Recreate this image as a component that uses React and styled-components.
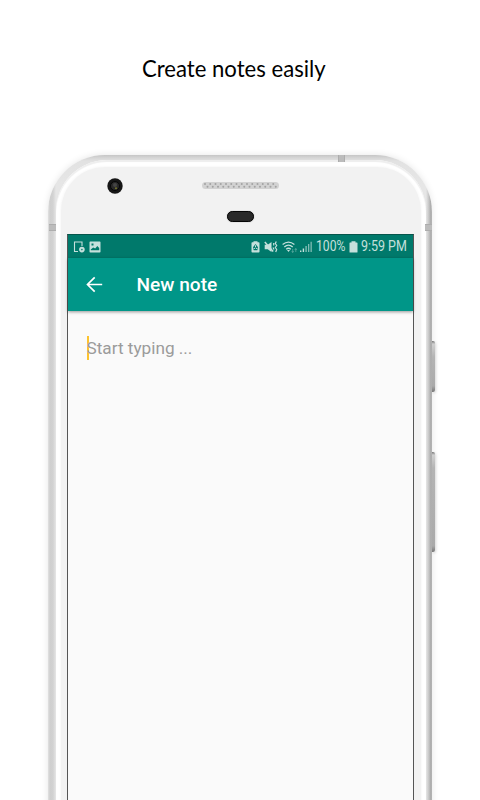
import React from 'react';
import styled, { createGlobalStyle } from 'styled-components';

const Global = createGlobalStyle`
  * { box-sizing: border-box; }
  body { margin: 0; background: #fff; overflow: hidden; }
`;

const Page = styled.main`
  width: 480px;
  height: 800px;
  overflow: hidden;
  display: flex;
  flex-direction: column;
  background: #fff;
`;

const Header = styled.header`
  height: 155px;
  flex: none;
  padding: 54px 0 0 142px;
`;

const Title = styled.h1`
  margin: 0;
  width: max-content;
  font: 400 23.5px/29px Lato, sans-serif;
  color: #000;
  transform: ${(p) => `scaleX(${p.$stretch})`};
  transform-origin: left;
`;

const Phone = styled.section`
  position: relative;
  width: 384px;
  height: 700px;
  flex: none;
  margin-left: 48px;
  padding: 5px 6px 0 8px;
  border-radius: 57px 57px 0 0;
  background:
    linear-gradient(#c6c6c6, #d6d6d6 3px, #e2e2e2 6px, transparent 30px),
    linear-gradient(90deg, #e2e2e2 0, #cfcfcf 2px, #d2d2d2 5px, #e6e6e6 8px, #e6e6e6 378px, #d0d0d0 380px, #a9a9a9 383px, #bcbcbc 384px);
  box-shadow: 0 0 7px rgba(0, 0, 0, 0.1);
`;

const Bezel = styled.div`
  height: 100%;
  padding: 7px 5px 0 5px;
  border-radius: 51px 51px 0 0;
  background: #fff;
  box-shadow: inset 0 2px 1px #eee;
`;

const Face = styled.div`
  height: 100%;
  padding: 0 7px 0 6px;
  border-radius: 44px 44px 0 0;
  background: #f2f2f2;
  box-shadow: 0 0 2px 1px #f9f9f9;
`;

const Sensors = styled.div`
  height: 67px;
  padding-top: 11px;
  display: grid;
  grid-template-columns: 95px 157px 95px;
  justify-items: center;
`;

const Camera = styled.svg`
  width: 16px;
  height: 16px;
`;

const Earpiece = styled.div`
  display: flex;
  flex-direction: column;
  align-items: center;
  padding-top: 4px;
  gap: 22px;
`;

const Grille = styled.svg`
  width: 77px;
  height: 7px;
`;

const Proximity = styled.i`
  width: 27px;
  height: 11px;
  border-radius: 6px;
  background: #292929;
  border: 1px solid #050505;
  box-shadow: 0 0 1px #777;
`;

const Screen = styled.div`
  width: 347px;
  height: 600px;
  border: 1px solid #555;
  border-top-color: #06564c;
  background: #fafafa;
`;

const StatusBar = styled.div`
  height: 23px;
  display: flex;
  align-items: center;
  padding: 0 6px 0 5px;
  background: #00796b;
  color: #c5e0dc;
  font: 400 14px/23px Roboto, sans-serif;
`;

const Glyph = styled.svg`
  flex: none;
  width: ${(p) => p.$w}px;
  height: 14px;
  margin-right: ${(p) => p.$gap || 0}px;
  fill: currentColor;
`;

const Spacer = styled.span`
  flex: 1;
`;

const StatusText = styled.span`
  width: ${(p) => p.$w}px;
  margin-right: ${(p) => p.$gap || 0}px;
  white-space: nowrap;
  transform: ${(p) => `scaleX(${p.$stretch})`};
  transform-origin: left;
`;

const AppBar = styled.div`
  height: 53px;
  display: flex;
  align-items: center;
  padding: 0 0 1px 18px;
  background: #009688;
  color: #fff;
  box-shadow: 0 1px 3px rgba(0, 0, 0, 0.4);
`;

const BackIcon = styled.svg`
  width: 17px;
  height: 17px;
  margin-right: 33.5px;
  fill: none;
  stroke: currentColor;
  stroke-width: 1.7;
`;

const AppTitle = styled.h2`
  margin: 0;
  padding-top: 2px;
  font: 500 19.1px/24px Roboto, sans-serif;
`;

const Editor = styled.div`
  display: flex;
  align-items: center;
  height: 24px;
  margin: 25px 0 0 18.5px;
  font: 400 17.2px/24px Roboto, sans-serif;
  color: #9b9b9b;
`;

const Caret = styled.i`
  width: 2px;
  height: 24px;
  margin-right: -2px;
  background: #fcc32e;
`;

const Antenna = styled.i`
  position: absolute;
  left: ${(p) => p.$x}px;
  top: ${(p) => p.$y}px;
  width: ${(p) => p.$w}px;
  height: ${(p) => p.$h}px;
  background: #bcbcbc;
  border: solid #adadad;
  border-width: ${(p) => (p.$side ? '1px 0' : '0 1px')};
`;

const SideButton = styled.i`
  position: absolute;
  left: 384px;
  top: ${(p) => p.$y}px;
  width: 3px;
  height: ${(p) => p.$h}px;
  border-radius: 0 2px 2px 0;
  background: linear-gradient(#777 0, #d0d0d0 3px, #b4b4b4 16px, #aaa calc(100% - 6px), #777 100%);
  box-shadow: 1px 1px 3px rgba(0, 0, 0, 0.15);
`;

const holes = Array.from({ length: 14 }, (_, i) => 4 + i * 5.25);

export default function App() {
  return (
    <>
      <Global />
      <Page>
        <Header>
          <Title $stretch={0.941}>Create notes easily</Title>
        </Header>
        <Phone>
          <Antenna $x={290} $y={0} $w={7} $h={7} />
          <Antenna $side $x={1} $y={69} $w={7} $h={7} />
          <Antenna $side $x={377} $y={69} $w={7} $h={7} />
          <SideButton $y={186} $h={51} />
          <SideButton $y={297} $h={100} />
          <Bezel>
            <Face>
              <Sensors>
                <Camera viewBox="0 0 16 16">
                  <circle cx="8" cy="8" r="7.7" fill="#161616" />
                  <circle cx="8" cy="8" r="4.5" fill="#292929" stroke="#050505" />
                  <circle cx="8" cy="7" r="2" fill="#444" />
                  <circle cx="9" cy="10.3" r="1" fill="#77772c" />
                </Camera>
                <Earpiece>
                  <Grille viewBox="0 0 77 7">
                    <rect width="77" height="7" rx="3.5" fill="#d2d2d2" />
                    {holes.map((x) => (
                      <g key={x} fill="#a2a2a2">
                        <circle cx={x - 1} cy="2" r="1" />
                        <circle cx={x + 1.5} cy="4.7" r="1" />
                      </g>
                    ))}
                  </Grille>
                  <Proximity />
                </Earpiece>
              </Sensors>
              <Screen>
                <StatusBar>
                  <Glyph $w={12} $gap={4} viewBox="0 0 12 14">
                    <path d="M5 11.5H1.5V2H9V6" fill="none" stroke="currentColor" strokeWidth="1.1" />
                    <circle cx="8.9" cy="9.6" r="2.8" />
                    <circle cx="8.9" cy="9.6" r=".8" fill="#00796b" />
                  </Glyph>
                  <Glyph $w={12} viewBox="0 0 12 14">
                    <path fillRule="evenodd" d="M1.3 1.5h9.4q.8 0 .8.8v9.4q0 .8-.8.8H1.3q-.8 0-.8-.8V2.3q0-.8.8-.8zM1.8 10.3h8.4V8L8.3 6 6.2 8.4 4.2 7.4 1.8 9.5zM2.5 3.5v2h2v-2z" />
                  </Glyph>
                  <Spacer />
                  <Glyph $w={9} $gap={4} viewBox="0 0 9 14">
                    <path fillRule="evenodd" d="M2.5 1.2h4v1H7.7q.8 0 .8.8v8.8q0 .8-.8.8H1.3q-.8 0-.8-.8V3q0-.8.8-.8h1.2zM4.5 4 2 7.2l.7 3h3.6l.7-3z" />
                    <path d="M4.5 5.3v2M2.7 8.4h1.4M5 8.4h1.3" stroke="currentColor" />
                  </Glyph>
                  <Glyph $w={14} $gap={4} viewBox="0 0 14 14">
                    <path d="M.7 4.7h3L7.5 2v10L3.7 9.3h-3z" />
                    <path d="M.8 2l8.4 9.5" stroke="currentColor" strokeWidth="1.5" />
                    <path d="M9.7 3v2.5M9 7.5l1 2M12.3 1.5l-1 2 1.4 2-1.4 2 1.4 2-1 2.5" fill="none" stroke="currentColor" strokeWidth="1.2" />
                  </Glyph>
                  <Glyph $w={16} $gap={2} viewBox="0 0 16 14">
                    <path d="M.6 4.6Q6.5-.3 12.4 4.6M2.3 6.9q4.2-3.6 8.4 0M4.2 9.2q2.3-2 4.6 0" fill="none" stroke="currentColor" strokeWidth="1.3" />
                    <path d="M5 10h3L6.5 12z" />
                    <path d="M10.7 12.5V9M9.7 11.2l1 1.2 1-1.2M13.8 8.5V12M12.8 9.8l1-1.2 1 1.2" fill="none" stroke="currentColor" strokeWidth=".8" opacity=".45" />
                  </Glyph>
                  <Glyph $w={12} $gap={4} viewBox="0 0 12 14">
                    <path d="M0 10.5h1.4V12H0zM2.7 8.5h1.4V12H2.7z" />
                    <path d="M5.4 6h1.4v6H5.4zM8 4h1.3v8H8zM10.5 1.8h1.3V12h-1.3z" opacity=".65" />
                  </Glyph>
                  <StatusText $w={30} $gap={3} $stretch={0.87}>100%</StatusText>
                  <Glyph $w={9} $gap={3} viewBox="0 0 9 14">
                    <path d="M2.5 1.2h4v1.3h1.4q.6 0 .6.6v8.8q0 .6-.6.6H1.1q-.6 0-.6-.6V3.1q0-.6.6-.6h1.4z" />
                  </Glyph>
                  <StatusText $w={46} $stretch={0.89}>9:59 PM</StatusText>
                </StatusBar>
                <AppBar>
                  <BackIcon viewBox="0 0 17 17">
                    <path d="M16.2 8.5H2M8.7 1.3 1.5 8.5l7.2 7.2" />
                  </BackIcon>
                  <AppTitle>New note</AppTitle>
                </AppBar>
                <Editor>
                  <Caret />
                  <span>Start typing ...</span>
                </Editor>
              </Screen>
            </Face>
          </Bezel>
        </Phone>
      </Page>
    </>
  );
}
